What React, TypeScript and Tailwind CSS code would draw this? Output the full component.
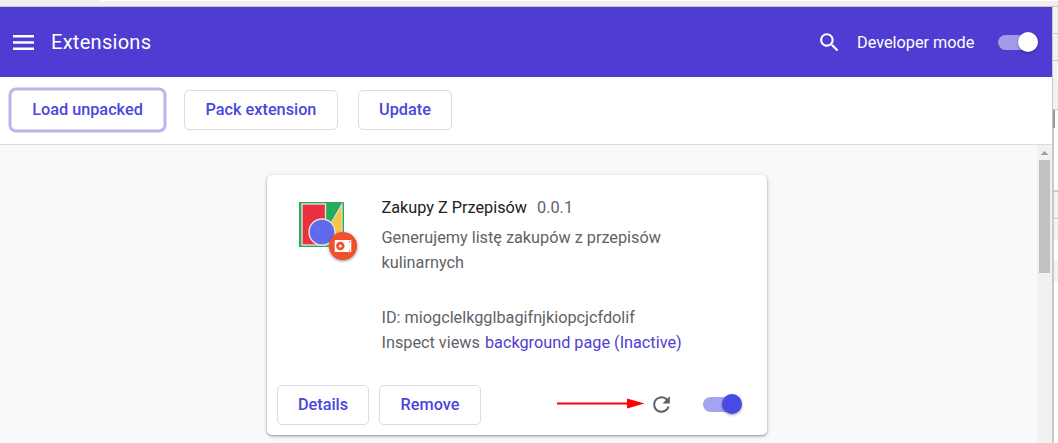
import React from "react";

function OutlineButton({ label, className = "" }: { label: string; className?: string }) {
  return (
    <button
      className={`h-10 shrink-0 rounded-[5px] border border-[#dadce0] bg-white text-center text-[16.25px] font-medium text-[#4a46e0] ${className}`}
    >
      {label}
    </button>
  );
}

function Toggle({ track, knob }: { track: string; knob: string }) {
  return (
    <span className="relative block h-5 w-10 shrink-0">
      <span className={`absolute left-0 top-[3px] h-[15px] w-[35px] rounded-full ${track}`} />
      <span
        className={`absolute left-[19.5px] top-0 size-5 rounded-full shadow-[0_1px_3px_rgba(0,0,0,0.4)] ${knob}`}
      />
    </span>
  );
}

function Header() {
  return (
    <header className="flex h-[70px] shrink-0 items-center bg-[#4f3dd3] pl-[13px] pr-[14px] text-white">
      <svg className="mt-px h-[15px] w-[21px]" viewBox="0 0 21 15" fill="currentColor">
        <path d="M0 0h21v2.4H0zM0 6.3h21v2.4H0zM0 12.6h21V15H0z" />
      </svg>
      <h1 className="ml-[17px] text-xl leading-none tracking-[0.28px]">Extensions</h1>
      <svg className="ml-auto size-[25px]" viewBox="0 0 24 24" fill="currentColor">
        <path d="M15.5 14h-.79l-.28-.27C15.41 12.59 16 11.11 16 9.5 16 5.91 13.09 3 9.5 3S3 5.91 3 9.5 5.91 16 9.5 16c1.61 0 3.09-.59 4.23-1.57l.27.28v.79l5 4.99L20.49 19l-4.99-5zm-6 0C7.01 14 5 11.99 5 9.5S7.01 5 9.5 5 14 7.01 14 9.5 11.99 14 9.5 14z" />
      </svg>
      <span className="ml-[15px] mt-[2px] w-[118px] whitespace-nowrap text-[16.25px]">Developer mode</span>
      <span className="ml-[23px]">
        <Toggle track="bg-[#a49be8]" knob="bg-white" />
      </span>
    </header>
  );
}

function ExtensionIcon() {
  return (
    <svg className="h-[66px] w-[66px] shrink-0" viewBox="0 0 66 66">
      <rect width="45" height="45" fill="#26ab5a" />
      <path d="M43 2v41H20z" fill="#f6c541" stroke="#e6dfd8" strokeWidth="1.2" />
      <rect x="3" y="2" width="23.5" height="41" fill="#e8303f" stroke="#e6dfd8" strokeWidth="1.4" />
      <circle cx="23" cy="30" r="13" fill="#5e6bec" stroke="#e6dfd8" strokeWidth="1.4" />
      <circle
        cx="44"
        cy="44"
        r="14"
        fill="#f24f2d"
        style={{ filter: "drop-shadow(0 1px 1.5px rgba(0,0,0,0.45))" }}
      />
      <rect x="35.7" y="38" width="16.6" height="12" rx="0.8" fill="#fff" />
      <circle cx="41.3" cy="44" r="4.2" fill="#f24f2d" />
      <circle cx="41.3" cy="44" r="1.5" fill="#fff" />
      <path d="M50 39h1.2v1.2H50zM50 48h1.2v1.2H50z" fill="#f24f2d" />
    </svg>
  );
}

function ExtensionCard() {
  return (
    <article className="ml-[267px] mt-[30px] flex h-[260px] w-[500px] flex-col rounded-[5px] bg-white shadow-[0_1px_2px_rgba(60,64,67,0.4),0_1px_4px_rgba(60,64,67,0.25)]">
      <div className="flex pl-8 pt-[27px]">
        <ExtensionIcon />
        <div className="-mt-[7px] ml-[16.5px] text-[16.25px] leading-[25px] text-[#5f6368]">
          <div className="mb-[5px] flex gap-[10px]">
            <h2 className="text-[#202124]">Zakupy Z Przepisów</h2>
            <span>0.0.1</span>
          </div>
          <p className="w-[300px]">Generujemy listę zakupów z przepisów kulinarnych</p>
          <p className="mt-[30px]">ID: miogclelkgglbagifnjkiopcjcfdolif</p>
          <p className="flex gap-[5px]">
            <span>Inspect views</span>
            <a className="text-[#4f3dd3]">background page (Inactive)</a>
          </p>
        </div>
      </div>
      <div className="mb-[10px] mt-auto flex items-center pl-[10px] pr-[24.5px]">
        <OutlineButton label="Details" className="w-[92px]" />
        <OutlineButton label="Remove" className="ml-[10px] w-[102px]" />
        <svg className="-mt-[4px] ml-[76px] h-[11px] w-[88px]" viewBox="0 0 88 11" fill="#f00">
          <path d="M0 4.5h70v2H0zM70 .5l17.5 5L70 10.5z" />
        </svg>
        <svg className="-mt-px ml-[4px] size-[25px]" viewBox="0 0 24 24" fill="#5f6368">
          <path d="M17.65 6.35C16.2 4.9 14.21 4 12 4c-4.42 0-7.99 3.58-7.99 8s3.57 8 7.99 8c3.73 0 6.84-2.55 7.73-6h-2.08c-.82 2.33-3.04 4-5.65 4-3.31 0-6-2.69-6-6s2.69-6 6-6c1.66 0 3.14.69 4.22 1.78L13 11h7V4l-2.35 2.35z" />
        </svg>
        <span className="-mt-[1.2px] ml-auto">
          <Toggle track="bg-[#a5a4f2]" knob="bg-[#474be4]" />
        </span>
      </div>
    </article>
  );
}

function Scrollbar() {
  return (
    <div className="flex w-[15px] shrink-0 flex-col items-center bg-[#f1f1f1]">
      <svg className="mt-[6px] h-[4px] w-[7px]" viewBox="0 0 7 4" fill="#a3a3a3">
        <path d="M3 0h1v1h1v1h1v1h1v1H0V3h1V2h1V1h1z" />
      </svg>
      <div className="mt-[5px] h-[113px] w-[11px] bg-[#c1c1c1]" />
    </div>
  );
}

function NeighbourWindow() {
  return (
    <div className="flex w-[6px] shrink-0 flex-col border-l border-[#c8c8c8] bg-white">
      <div className="h-[27px] border-b border-[#cbcbcb] bg-[#f2f2f2]" />
      <div className="h-[27px] border-b border-[#cbcbcb] bg-[#f2f2f2]" />
      <div className="flex h-[49px] justify-end border-b border-[#cbcbcb] bg-[#f2f2f2] pt-[3px]">
        <div className="h-[18px] w-px bg-white" />
      </div>
      <div className="h-[18px] w-[2px] bg-[#999]" />
      <div className="flex grow flex-col border-l border-[#cbcbcb]">
        <div className="h-[64px] border-b-2 border-[#cbcbcb]" />
        <div className="h-[27px] border-b border-[#cbcbcb] bg-[#f3f3f3]" />
        <div className="h-[21px] bg-[#f3f3f3]" />
        <div className="mt-[21px] h-[21px] bg-[#f3f3f3]" />
      </div>
    </div>
  );
}

export default function App() {
  return (
    <div className="flex h-[443px] w-[1058px] flex-col overflow-hidden bg-white font-[Roboto,sans-serif]">
      <div className="flex h-[7px] shrink-0 items-start border-b border-[#c9c8c8] bg-[#f1f0ee] pl-[99px]">
        <div className="h-px grow bg-white" />
      </div>
      <div className="flex min-h-0 grow">
        <main className="flex w-[1052px] shrink-0 flex-col">
          <Header />
          <div className="flex h-[68px] shrink-0 items-start border-b border-[#dadce0] pl-[11px] pt-[13px]">
            <OutlineButton label="Load unpacked" className="w-[153px] shadow-[0_0_0_2.5px_#b5b5f4]" />
            <OutlineButton label="Pack extension" className="ml-5 w-[154px]" />
            <OutlineButton label="Update" className="ml-5 w-[94px]" />
          </div>
          <div className="flex min-h-0 grow">
            <div className="grow bg-[#f8f9fb]">
              <ExtensionCard />
            </div>
            <Scrollbar />
          </div>
        </main>
        <NeighbourWindow />
      </div>
    </div>
  );
}
